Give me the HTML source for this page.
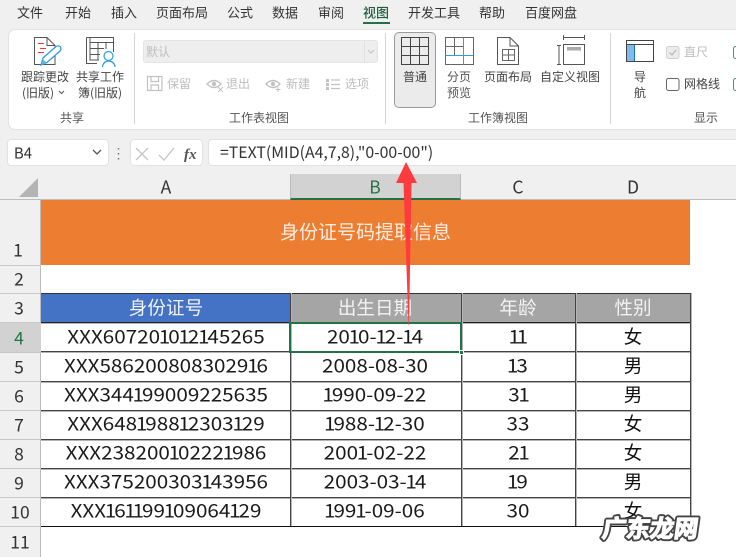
<!DOCTYPE html>
<html><head><meta charset="utf-8"><style>
html,body{margin:0;padding:0}
body{width:736px;height:557px;overflow:hidden;position:relative;background:#fff;font-family:"Noto Sans CJK SC","Liberation Sans",sans-serif}
div{position:absolute;box-sizing:border-box}
.t{white-space:nowrap;text-align:center;transform:translate(-50%,-50%);line-height:1}
.m{font-size:13px;color:#333}
.r{font-size:12px;color:#444}
.g{font-size:12px;color:#555}
.d{font-size:12px;color:#bdbdbd}
.c{font-size:18.6px;color:#1a1a1a;transform:translate(-50%,-50%) scaleX(1.11)}
.c i{font-style:normal;letter-spacing:-1.8px;margin-left:-1.2px}
.z{font-size:18.6px;color:#111}
.h{font-size:18.6px;color:#f2f2f2}
.n{font-size:17.5px;color:#333}
.hl{left:41px;width:649px;height:1px;background:#444;box-shadow:0 1px 0 #b4b4b4}
.vl{width:1px;background:#444;box-shadow:1px 0 0 #b4b4b4;top:293px;height:233px}
.rl{left:0;width:41px;height:1px;background:#c8c8c8}
</style></head><body>
<div style="left:0;top:0;width:736px;height:200px;background:#f0f0f0"></div>

<!-- menu -->
<div class="t m" style="left:30px;top:12px">文件</div>
<div class="t m" style="left:78px;top:12px">开始</div>
<div class="t m" style="left:124px;top:12px">插入</div>
<div class="t m" style="left:182px;top:12px">页面布局</div>
<div class="t m" style="left:240px;top:12px">公式</div>
<div class="t m" style="left:285px;top:12px">数据</div>
<div class="t m" style="left:331px;top:12px">审阅</div>
<div class="t m" style="left:376px;top:12px;color:#1f5f3c;font-weight:500">视图</div>
<div style="left:363px;top:22px;width:27px;height:2px;background:#217346"></div>
<div class="t m" style="left:434px;top:12px">开发工具</div>
<div class="t m" style="left:492px;top:12px">帮助</div>
<div class="t m" style="left:551px;top:12px">百度网盘</div>

<!-- ribbon -->
<div style="left:8px;top:29px;width:740px;height:101px;background:#fff;border-radius:7px;border:1px solid #e2e2e2"></div>
<div style="left:134px;top:33px;width:1px;height:91px;background:#d4d4d4"></div>
<div style="left:385px;top:33px;width:1px;height:91px;background:#d4d4d4"></div>
<div style="left:610px;top:33px;width:1px;height:91px;background:#d4d4d4"></div>

<svg style="position:absolute;left:0;top:0" width="736" height="200" fill="none">
 <!-- track changes -->
 <path d="M34.500 37.500H47L55 45.500V64.500H34.500Z" stroke="#555" fill="#fff"/>
 <path d="M47 37.500V45.500H55" stroke="#555"/>
 <path d="M38 43.500H44M40 48.500H46M38 52.500H44" stroke="#f03a3a"/>
 <path d="M41 65L43 58L56 46.500Q58.500 45 60.500 47Q61.500 49 60 51L47 62.500Z" fill="#fff" stroke="#2d9ce0" stroke-width="1.300"/>
 <path d="M41 65L43 59.500L46.500 62.500Z" fill="#64b5ea"/>
 <!-- share workbook -->
 <path d="M86.500 37.500H113.500V52M90 37.500V60H99M90 42.500H113.500M90 48.500H104M90 54.500H100M98 42.500V60M106 42.500V49" stroke="#555"/>
 <path d="M86.500 37.500V63.500H97" stroke="#555"/>
 <circle cx="108.500" cy="56" r="4.500" fill="#fff" stroke="#2d9ce0" stroke-width="1.200"/>
 <path d="M102.500 67Q103 61.500 108.500 61Q114.500 61.500 115 67" stroke="#2d9ce0" stroke-width="1.200" fill="#fff"/>
 <!-- disabled row -->
 <path d="M147.500 76.500H162V90.500H147.500ZM151 76.500V81.500H158.500V76.500M151 90.500V85H158.500V90.500" stroke="#c2c2c2" stroke-width="1.200"/>
 <path d="M207 84Q214 77 221 84Q214 91 207 84Z" stroke="#c2c2c2" stroke-width="1.300"/><circle cx="214" cy="84" r="2.200" fill="#c2c2c2"/>
 <path d="M218 87L223 92M223 87L218 92" stroke="#c2c2c2"/>
 <path d="M266 84Q273 77 280 84Q273 91 266 84Z" stroke="#c2c2c2" stroke-width="1.300"/><circle cx="273" cy="84" r="2.200" fill="#c2c2c2"/>
 <path d="M278 87V92M275.500 89.500H280.500" stroke="#c2c2c2"/>
 <path d="M326 79H329V82H326ZM326 83H329V86H326ZM326 87H329V90H326Z" fill="#c2c2c2"/>
 <path d="M331 80H340M331 84.500H340M331 88.500H340" stroke="#c2c2c2" stroke-width="1.200"/>
 <!-- page break -->
 <path d="M445.500 37.500H473.500V64.500H445.500ZM454.500 37.500V55M445.500 46.500H463" stroke="#666"/>
 <path d="M463.500 37.500V64.500M445.500 55.500H473.500" stroke="#2d9ce0"/>
 <!-- page layout -->
 <path d="M497.500 37.500H510L518.500 46V64.500H497.500Z" stroke="#555"/><path d="M510 37.500V46H518.500" stroke="#555"/>
 <path d="M502.500 49.500H514.500V60.500H502.500ZM508.500 49.500V60.500M502.500 55H514.500" stroke="#666"/>
 <!-- custom -->
 <path d="M563.500 37.500H584.500M563.500 35V40M584.500 35V40M557 45.500H561M557 64.500H561M559 45.500V64.500" stroke="#555"/>
 <path d="M563.500 44.500H584.500V64.500H563.500Z" stroke="#555"/><rect x="567" y="47" width="14" height="3.500" fill="#aaa"/>
 <!-- navigation -->
 <rect x="627" y="45" width="7" height="17" fill="#7fbcec"/>
 <path d="M626.500 40.500H653.500V61.500H626.500ZM626.500 44.500H653.500" stroke="#444"/>
 <path d="M634.500 45V61" stroke="#1f6fc0"/>
 <!-- checkboxes -->
 <rect x="666.500" y="46.500" width="12.500" height="12" rx="2" fill="#ececec" stroke="#d0d0d0"/>
 <path d="M669.500 52.500L672 55L676 50" stroke="#b5b5b5" stroke-width="1.200"/>
 <rect x="666.500" y="78.500" width="12.500" height="12" rx="2" fill="#fff" stroke="#666"/>
 <rect x="733.500" y="46.500" width="8" height="12" rx="2" stroke="#3f9a60"/>
 <rect x="733.500" y="78.500" width="8" height="12" rx="2" stroke="#3f9a60"/>
 <path d="M59 91l2.500 2.500L64 91" stroke="#555"/>
</svg>

<div style="left:394px;top:32px;width:42px;height:76px;background:#ebebeb;border:1px solid #9a9a9a;border-radius:5px"></div>
<svg style="position:absolute;left:394px;top:32px" width="42" height="40" fill="none"><path d="M7.500 5.500H34.500V32.500H7.500ZM16.500 5.500V32.500M25.500 5.500V32.500M7.500 14.500H34.500M7.500 23.500H34.500" stroke="#444"/></svg>

<div class="t r" style="left:45px;top:77px">跟踪更改</div>
<div class="t r" style="left:38px;top:93px">(旧版)</div>
<div class="t r" style="left:100px;top:77px">共享工作</div>
<div class="t r" style="left:100px;top:93px">簿(旧版)</div>
<div class="t g" style="left:72px;top:118px">共享</div>

<div style="left:143px;top:40px;width:235px;height:23px;background:#eeeeee;border:1px solid #e4e4e4;border-radius:3px"></div>
<div style="left:364px;top:41px;width:1px;height:21px;background:#e0e0e0"></div>
<svg style="position:absolute;left:366px;top:48px" width="11" height="8" fill="none"><path d="M2 2l3 3 3-3" stroke="#c4c4c4"/></svg>
<div class="t d" style="left:158px;top:52px">默认</div>
<div class="t d" style="left:179px;top:84px">保留</div>
<div class="t d" style="left:238px;top:84px">退出</div>
<div class="t d" style="left:298px;top:84px">新建</div>
<div class="t d" style="left:357px;top:84px">选项</div>
<div class="t g" style="left:259px;top:118px">工作表视图</div>

<div class="t r" style="left:415px;top:77px">普通</div>
<div class="t g" style="left:459px;top:77px">分页</div>
<div class="t g" style="left:459px;top:93px">预览</div>
<div class="t r" style="left:508px;top:77px">页面布局</div>
<div class="t r" style="left:570px;top:77px">自定义视图</div>
<div class="t r" style="left:640px;top:77px">导</div>
<div class="t r" style="left:640px;top:93px">航</div>
<div class="t g" style="left:498px;top:118px">工作簿视图</div>
<div class="t d" style="left:696px;top:52px">直尺</div>
<div class="t r" style="left:702px;top:84px">网格线</div>
<div class="t g" style="left:706px;top:118px">显示</div>

<!-- formula bar -->
<div style="left:7px;top:139px;width:102px;height:27px;background:#fff;border:1px solid #e2e2e2;border-radius:4px"></div>
<div class="t" style="left:23px;top:153px;font-size:15px;color:#333">B4</div>
<div style="left:130px;top:139px;width:73px;height:27px;background:#fff;border:1px solid #e2e2e2;border-radius:4px"></div>
<div style="left:208px;top:139px;width:540px;height:27px;background:#fff;border:1px solid #e2e2e2;border-radius:4px"></div>
<div style="left:220px;top:144px;font-size:15.850px;color:#333;line-height:15px;white-space:nowrap">=TEXT(MID(A4,7,8),"0-00-00")</div>
<svg style="position:absolute;left:0;top:135px" width="210" height="35" fill="none">
 <path d="M93 15l4 4 4-4" stroke="#555" stroke-width="1.300"/>
 <path d="M118.500 13v1.500M118.500 18v1.500M118.500 23v1.500" stroke="#777" stroke-width="1.500"/>
 <path d="M136 13L148 25M148 13L136 25" stroke="#c4c4c4" stroke-width="1.300"/>
 <path d="M159 20L164 25L174 13" stroke="#c4c4c4" stroke-width="1.300"/>
 <text x="184" y="24" font-family="Liberation Serif" font-style="italic" font-weight="700" font-size="15" fill="#555">fx</text>
</svg>

<!-- headers -->
<div style="left:0;top:166px;width:736px;height:34px;background:#f0f0f0"></div>
<div style="left:290px;top:174px;width:171px;height:26px;background:#d2d2d2;border-left:1px solid #bbb;border-right:1px solid #bbb;border-bottom:2px solid #217346"></div>
<div style="left:0;top:199px;width:290px;height:1px;background:#bcbcbc"></div>
<div style="left:461px;top:199px;width:275px;height:1px;background:#bcbcbc"></div>
<svg style="position:absolute;left:0;top:166px" width="41" height="34"><path d="M19 31L38 12V31Z" fill="#b4b4b4"/></svg>
<div class="t n" style="left:166px;top:187px">A</div>
<div class="t n" style="left:375px;top:187px;color:#217346">B</div>
<div class="t n" style="left:518px;top:187px">C</div>
<div class="t n" style="left:633px;top:187px">D</div>

<!-- row headers -->
<div style="left:0;top:200px;width:41px;height:357px;background:#f0f0f0;border-right:1px solid #bcbcbc"></div>
<div style="left:0;top:323px;width:41px;height:29px;background:#d2d2d2"></div>
<div class="rl" style="top:265px"></div><div class="rl" style="top:293px"></div><div class="rl" style="top:322px"></div><div class="rl" style="top:352px"></div><div class="rl" style="top:381px"></div><div class="rl" style="top:410px"></div><div class="rl" style="top:439px"></div><div class="rl" style="top:468px"></div><div class="rl" style="top:497px"></div><div class="rl" style="top:526px"></div>
<div class="t n" style="left:18px;top:250px">1</div>
<div class="t n" style="left:19px;top:279px">2</div>
<div class="t n" style="left:19px;top:308px">3</div>
<div class="t n" style="left:19px;top:338px;color:#217346">4</div>
<div class="t n" style="left:19px;top:367px">5</div>
<div class="t n" style="left:19px;top:396px">6</div>
<div class="t n" style="left:19px;top:425px">7</div>
<div class="t n" style="left:19px;top:454px">8</div>
<div class="t n" style="left:19px;top:483px">9</div>
<div class="t n" style="left:20px;top:512px">10</div>
<div class="t n" style="left:20px;top:542px">11</div>

<!-- sheet -->
<div style="left:41px;top:200px;width:649px;height:65px;background:#ed7d31"></div>
<div class="t" style="left:365.500px;top:231px;font-size:19px;color:#fbeee4">身份证号码提取信息</div>
<div style="left:41px;top:293px;width:249px;height:30px;background:#4472c4"></div>
<div style="left:290px;top:293px;width:400px;height:30px;background:#a5a5a5"></div>
<div class="hl" style="top:293px;box-shadow:none;background:#333"></div>
<div class="hl" style="top:322px;background:#222"></div>
<div class="hl" style="top:351px"></div><div class="hl" style="top:381px"></div><div class="hl" style="top:410px"></div><div class="hl" style="top:439px"></div><div class="hl" style="top:468px"></div><div class="hl" style="top:497px"></div>
<div class="hl" style="top:526px;box-shadow:none;background:#111"></div>
<div class="vl" style="left:290px"></div><div class="vl" style="left:461px"></div><div class="vl" style="left:575px"></div><div class="vl" style="left:690px"></div>

<div class="t h" style="left:166px;top:308px">身份证号</div>
<div class="t h" style="left:375px;top:308px">出生日期</div>
<div class="t h" style="left:518px;top:308px">年龄</div>
<div class="t h" style="left:633px;top:308px">性别</div>

<div class="t c" style="left:166px;top:337px">XXX60720<i>1</i>0<i>1</i>2<i>1</i>45265</div><div class="t c" style="left:375px;top:337px">20<i>1</i>0-<i>1</i>2-<i>1</i>4</div><div class="t c" style="left:518px;top:337px"><i>1</i><i>1</i></div><div class="t z" style="left:633px;top:337px">女</div>
<div class="t c" style="left:166px;top:366px">XXX5862008083029<i>1</i>6</div><div class="t c" style="left:375px;top:366px">2008-08-30</div><div class="t c" style="left:518px;top:366px"><i>1</i>3</div><div class="t z" style="left:633px;top:366px">男</div>
<div class="t c" style="left:166px;top:395px">XXX344<i>1</i>99009225635</div><div class="t c" style="left:375px;top:395px"><i>1</i>990-09-22</div><div class="t c" style="left:518px;top:395px">3<i>1</i></div><div class="t z" style="left:633px;top:395px">男</div>
<div class="t c" style="left:166px;top:424px">XXX648<i>1</i>988<i>1</i>2303<i>1</i>29</div><div class="t c" style="left:375px;top:424px"><i>1</i>988-<i>1</i>2-30</div><div class="t c" style="left:518px;top:424px">33</div><div class="t z" style="left:633px;top:424px">女</div>
<div class="t c" style="left:166px;top:453px">XXX238200<i>1</i>0222<i>1</i>986</div><div class="t c" style="left:375px;top:453px">200<i>1</i>-02-22</div><div class="t c" style="left:518px;top:453px">2<i>1</i></div><div class="t z" style="left:633px;top:453px">女</div>
<div class="t c" style="left:166px;top:482px">XXX375200303<i>1</i>43956</div><div class="t c" style="left:375px;top:482px">2003-03-<i>1</i>4</div><div class="t c" style="left:518px;top:482px"><i>1</i>9</div><div class="t z" style="left:633px;top:482px">男</div>
<div class="t c" style="left:166px;top:511px">XXX<i>1</i>6<i>1</i><i>1</i>99<i>1</i>09064<i>1</i>29</div><div class="t c" style="left:375px;top:511px"><i>1</i>99<i>1</i>-09-06</div><div class="t c" style="left:518px;top:511px">30</div><div class="t z" style="left:633px;top:511px">女</div>

<!-- selection -->
<div style="left:289px;top:322px;width:173px;height:31px;border:2px solid #217346"></div>
<div style="left:459px;top:350px;width:5px;height:5px;background:#217346;border:1px solid #fff"></div>

<!-- arrow -->
<svg style="position:absolute;left:0;top:0" width="736" height="557"><path d="M406 162L417 183H411.500L409 325H408.500L403.500 183H396Z" fill="#ff3b3f"/></svg>

<!-- watermark -->
<svg style="position:absolute;left:596px;top:510px" width="110" height="36" font-family="Noto Sans CJK SC" font-weight="700" font-size="24">
 <g transform="skewX(-8) translate(9 0)">
 <text x="0" y="27" fill="#444" stroke="#444" stroke-width="5" stroke-linejoin="round">广东龙网</text>
 <text x="0" y="27" fill="#fff" stroke="#fff" stroke-width="1.200">广东龙网</text>
 </g>
</svg>
</body></html>
